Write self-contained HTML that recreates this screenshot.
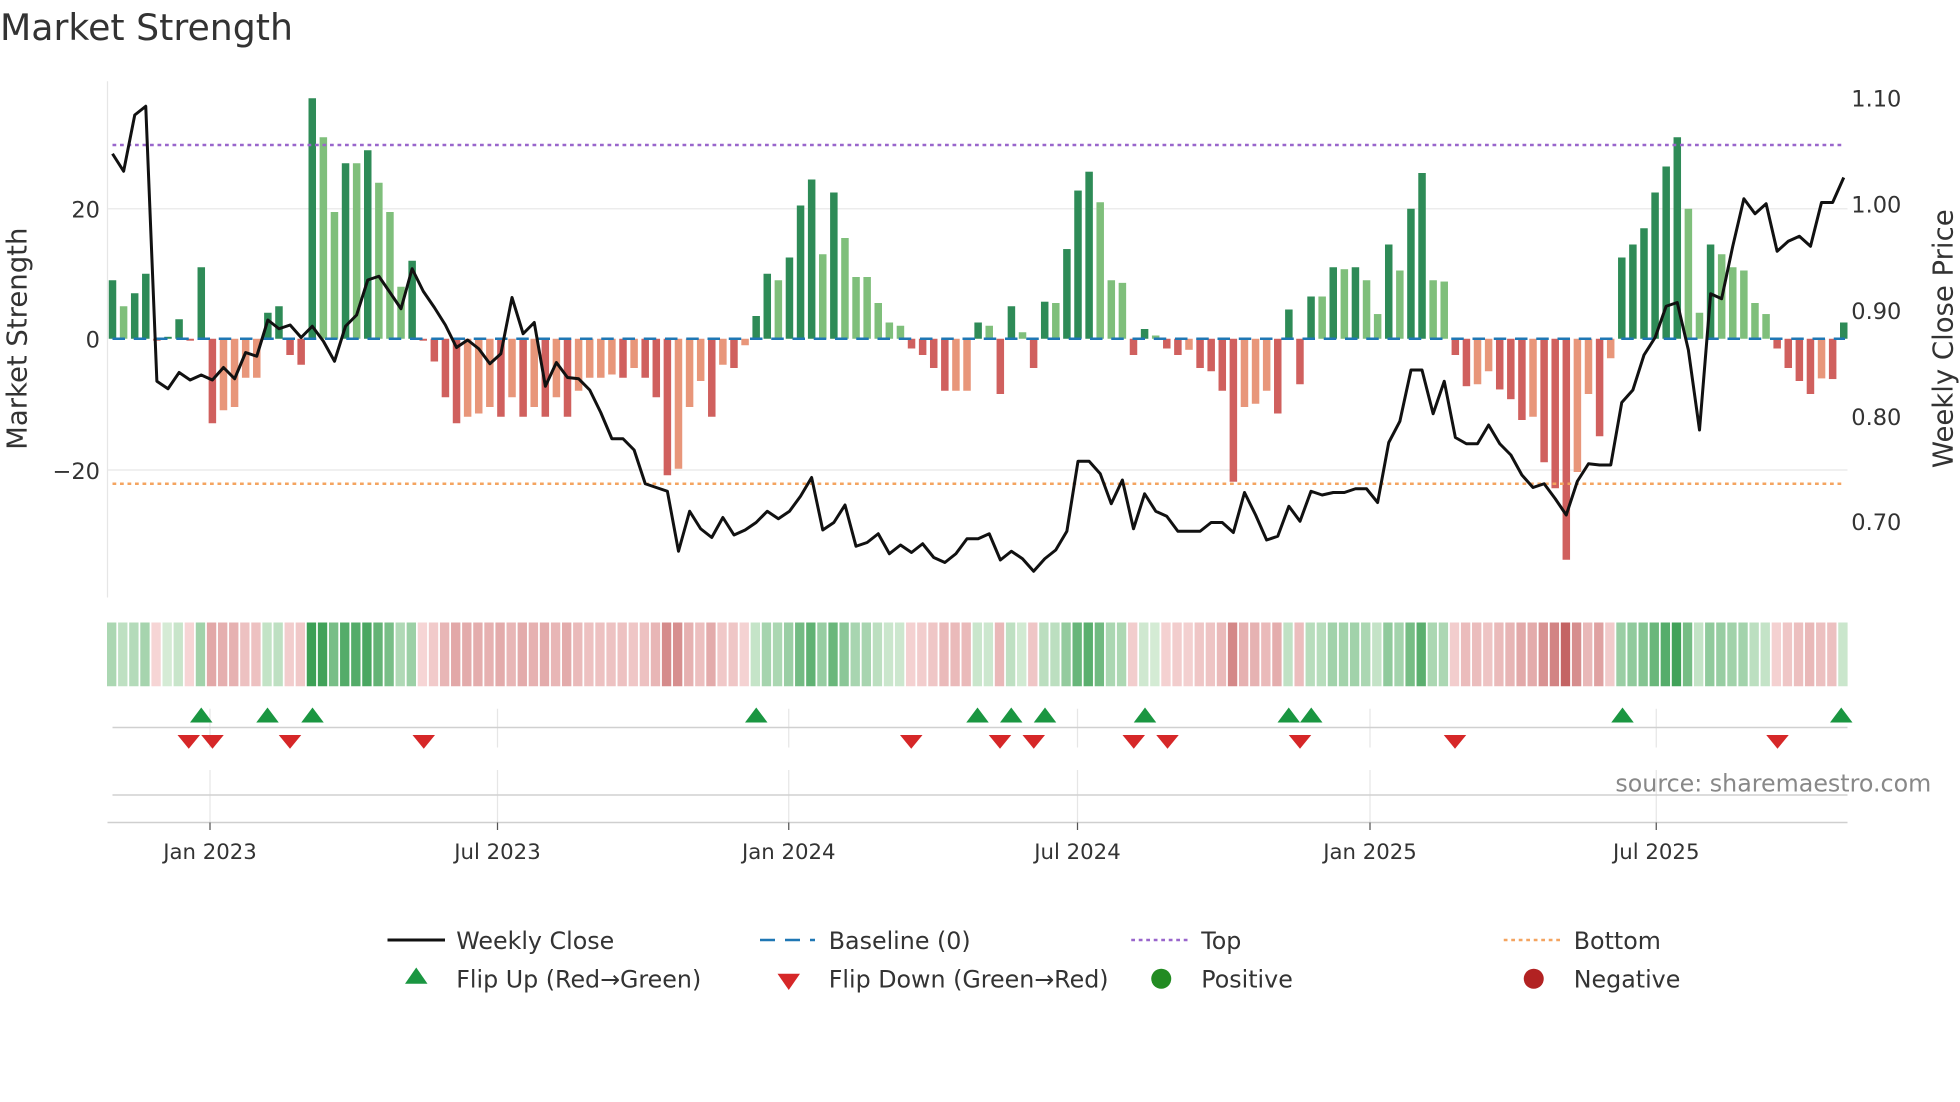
<!DOCTYPE html>
<html><head><meta charset="utf-8">
<style>
html,body{margin:0;padding:0;background:#fff;}
svg{display:block;font-family:"DejaVu Sans","Liberation Sans",sans-serif;}
</style></head>
<body>
<svg id="s" width="1960" height="1102" viewBox="0 0 1568 881.6" xmlns="http://www.w3.org/2000/svg">
<rect width="1568" height="882" fill="#fff"/>
<text x="0" y="32" font-size="29" fill="#333">Market Strength</text>
<line x1="86" y1="167" x2="1478" y2="167" stroke="#ececec" stroke-width="1.2"/>
<line x1="86" y1="376" x2="1478" y2="376" stroke="#ececec" stroke-width="1.2"/>
<line x1="86" y1="65" x2="86" y2="478" stroke="#e6e6e6" stroke-width="1"/>
<g id="bars"></g>
<line x1="90" y1="116" x2="1476" y2="116" stroke="#9966cc" stroke-width="2" stroke-dasharray="3,3"/>
<line x1="90" y1="387" x2="1476" y2="387" stroke="#f4a460" stroke-width="2" stroke-dasharray="3,3"/>
<line x1="90" y1="271" x2="1476" y2="271" stroke="#1f77b4" stroke-width="2" stroke-dasharray="10,7"/>
<polyline id="price" fill="none" stroke="#111" stroke-width="2.4" stroke-linejoin="round"/>
<g font-size="18" fill="#333" text-anchor="end">
<text x="80" y="174">20</text><text x="80" y="278">0</text><text x="80" y="383">−20</text>
</g>
<text transform="translate(21,271) rotate(-90)" font-size="22" fill="#333" text-anchor="middle">Market Strength</text>
<g font-size="18" fill="#333">
<text x="1481" y="85">1.10</text><text x="1481" y="170">1.00</text><text x="1481" y="255">0.90</text><text x="1481" y="340">0.80</text><text x="1481" y="424">0.70</text>
</g>
<text transform="translate(1562,271) rotate(-90)" font-size="22" fill="#333" text-anchor="middle">Weekly Close Price</text>
<g id="heat"></g>
<g stroke="#e6e6e6" stroke-width="1">
<line x1="168" y1="567" x2="168" y2="598"/><line x1="398" y1="567" x2="398" y2="598"/><line x1="631" y1="567" x2="631" y2="598"/><line x1="862" y1="567" x2="862" y2="598"/><line x1="1096" y1="567" x2="1096" y2="598"/><line x1="1325" y1="567" x2="1325" y2="598"/>
<line x1="168" y1="616" x2="168" y2="658"/><line x1="398" y1="616" x2="398" y2="658"/><line x1="631" y1="616" x2="631" y2="658"/><line x1="862" y1="616" x2="862" y2="658"/><line x1="1096" y1="616" x2="1096" y2="658"/><line x1="1325" y1="616" x2="1325" y2="658"/>
</g>
<line x1="90" y1="582" x2="1478" y2="582" stroke="#d0d0d0" stroke-width="1.2"/>
<line x1="90" y1="636" x2="1478" y2="636" stroke="#d0d0d0" stroke-width="1.2"/>
<line x1="86" y1="658" x2="1478" y2="658" stroke="#cfcfcf" stroke-width="1.2"/>
<g id="flips"></g>
<text x="1545" y="633" font-size="19" fill="#888" text-anchor="end">source: sharemaestro.com</text>
<g stroke="#555" stroke-width="1"><line x1="168" y1="658" x2="168" y2="664"/><line x1="398" y1="658" x2="398" y2="664"/><line x1="631" y1="658" x2="631" y2="664"/><line x1="862" y1="658" x2="862" y2="664"/><line x1="1096" y1="658" x2="1096" y2="664"/><line x1="1325" y1="658" x2="1325" y2="664"/></g>
<g font-size="17" fill="#333" text-anchor="middle">
<text x="168" y="687">Jan 2023</text><text x="398" y="687">Jul 2023</text><text x="631" y="687">Jan 2024</text><text x="862" y="687">Jul 2024</text><text x="1096" y="687">Jan 2025</text><text x="1325" y="687">Jul 2025</text>
</g>
<g font-size="19" fill="#333">
<line x1="310" y1="752" x2="356" y2="752" stroke="#111" stroke-width="2.4"/><text x="365" y="759">Weekly Close</text>
<line x1="608" y1="752" x2="652" y2="752" stroke="#1f77b4" stroke-width="2" stroke-dasharray="12,8"/><text x="663" y="759">Baseline (0)</text>
<line x1="905" y1="752" x2="950" y2="752" stroke="#9966cc" stroke-width="2" stroke-dasharray="3,3"/><text x="961" y="759">Top</text>
<line x1="1203" y1="752" x2="1248" y2="752" stroke="#f4a460" stroke-width="2" stroke-dasharray="3,3"/><text x="1259" y="759">Bottom</text>
<polygon points="333,774 342,787 324,787" fill="#1a9641"/><text x="365" y="790">Flip Up (Red→Green)</text>
<polygon points="622,779 640,779 631,792" fill="#d62728"/><text x="663" y="790">Flip Down (Green→Red)</text>
<circle cx="929" cy="783" r="8" fill="#228b22"/><text x="961" y="790">Positive</text>
<circle cx="1227" cy="783" r="8" fill="#b22222"/><text x="1259" y="790">Negative</text>
</g>
</svg>
<script>
var v=[9,5,7,10,-0.3,0.3,3,-0.3,11,-13,-11,-10.5,-6,-6,4,5,-2.5,-4,37,31,19.5,27,27,29,24,19.5,8,12,-0.3,-3.5,-9,-13,-12,-11.5,-10.5,-12,-9,-12,-10.5,-12,-9,-12,-8,-6,-6,-5.5,-6,-4.5,-6,-9,-21,-20,-10.5,-6.5,-12,-4,-4.5,-1,3.5,10,9,12.5,20.5,24.5,13,22.5,15.5,9.5,9.5,5.5,2.5,2,-1.5,-2.5,-4.5,-8,-8,-8,2.5,2,-8.5,5,1,-4.5,5.7,5.5,13.8,22.8,25.7,21,9,8.6,-2.5,1.5,0.5,-1.5,-2.5,-1.7,-4.5,-5,-8,-22,-10.5,-10,-8,-11.5,4.5,-7,6.5,6.5,11,10.7,11,9,3.8,14.5,10.5,20,25.5,9,8.8,-2.5,-7.3,-7,-5,-7.8,-9.3,-12.5,-12,-19,-23,-34,-20.5,-8.5,-15,-3,12.5,14.5,17,22.5,26.5,31,20,4,14.5,13,11,10.5,5.5,3.8,-1.5,-4.5,-6.5,-8.5,-6.1,-6.2,2.5];
var n=v.length,x0=90,step=(1475-90)/(n-1),NS="http://www.w3.org/2000/svg";
function el(t,a){var e=document.createElementNS(NS,t);for(var k in a)e.setAttribute(k,a[k]);return e;}
var bars=document.getElementById('bars'),heat=document.getElementById('heat');
function mix(a,b,t){return 'rgb('+[0,1,2].map(function(i){return Math.round(a[i]+(b[i]-a[i])*t)}).join(',')+')';}
for(var i=0;i<n;i++){
 var val=v[i],p=i?v[i-1]:0,x=x0+i*step;
 var dark=(i==0)||(val*p<=0)||Math.abs(val)>Math.abs(p);
 var c=val>=0?(dark?'#2e8b57':'#7fbf7b'):(dark?'#d0605e':'#e8967a');
 var y0=271,y1=271-val*5.2;
 bars.appendChild(el('rect',{x:x-3,y:Math.min(y0,y1),width:6,height:Math.max(0.8,Math.abs(y1-y0)),fill:c}));
 var t=Math.min(1,Math.abs(val)/32);
 var hc=val>=0?mix([214,236,214],[60,160,85],t):mix([246,214,214],[196,100,100],t);
 heat.appendChild(el('rect',{x:x-4.4,y:498,width:step-1.4,height:51,fill:hc}));
}
var py=[123,137,92,85,305,311,298,304,300,304,294,303,282,285,256,263,260,270,261,273,289,261,252,224,221,234,247,215,233,246,260,278,272,279,291,283,238,267,258,309,290,302,303,312,330,351,351,360,387,390,393,441,409,423,430,414,428,424,418,409,415,409,397,382,424,418,404,437,434,427,443,436,442,435,446,450,443,431,431,427,448,441,447,457,447,440,425,369,369,379,403,384,423,395,409,413,425,425,425,418,418,426,394,412,432,429,405,417,393,396,394,394,391,391,402,354,337,296,296,331,305,350,355,355,340,355,364,380,390,387,399,412,385,371,372,372,322,312,284,270,245,242,280,344,235,239,197,159,171,163,201,193,189,197,162,162,142];
var ps=(1475-90)/(py.length-1),pts=[];
for(var j=0;j<py.length;j++)pts.push((90+j*ps).toFixed(1)+','+py[j]);
document.getElementById('price').setAttribute('points',pts.join(' '));
var fl=document.getElementById('flips');
[161,214,250,605,782,809,836,916,1031,1049,1298,1473].forEach(function(x){fl.appendChild(el('polygon',{points:(x)+',566 '+(x+9)+',578 '+(x-9)+',578',fill:'#1a9641'}));});
[151,170,232,339,729,800,827,907,934,1040,1164,1422].forEach(function(x){fl.appendChild(el('polygon',{points:(x-9)+',588 '+(x+9)+',588 '+x+',599',fill:'#d62728'}));});
</script>
</body></html>
